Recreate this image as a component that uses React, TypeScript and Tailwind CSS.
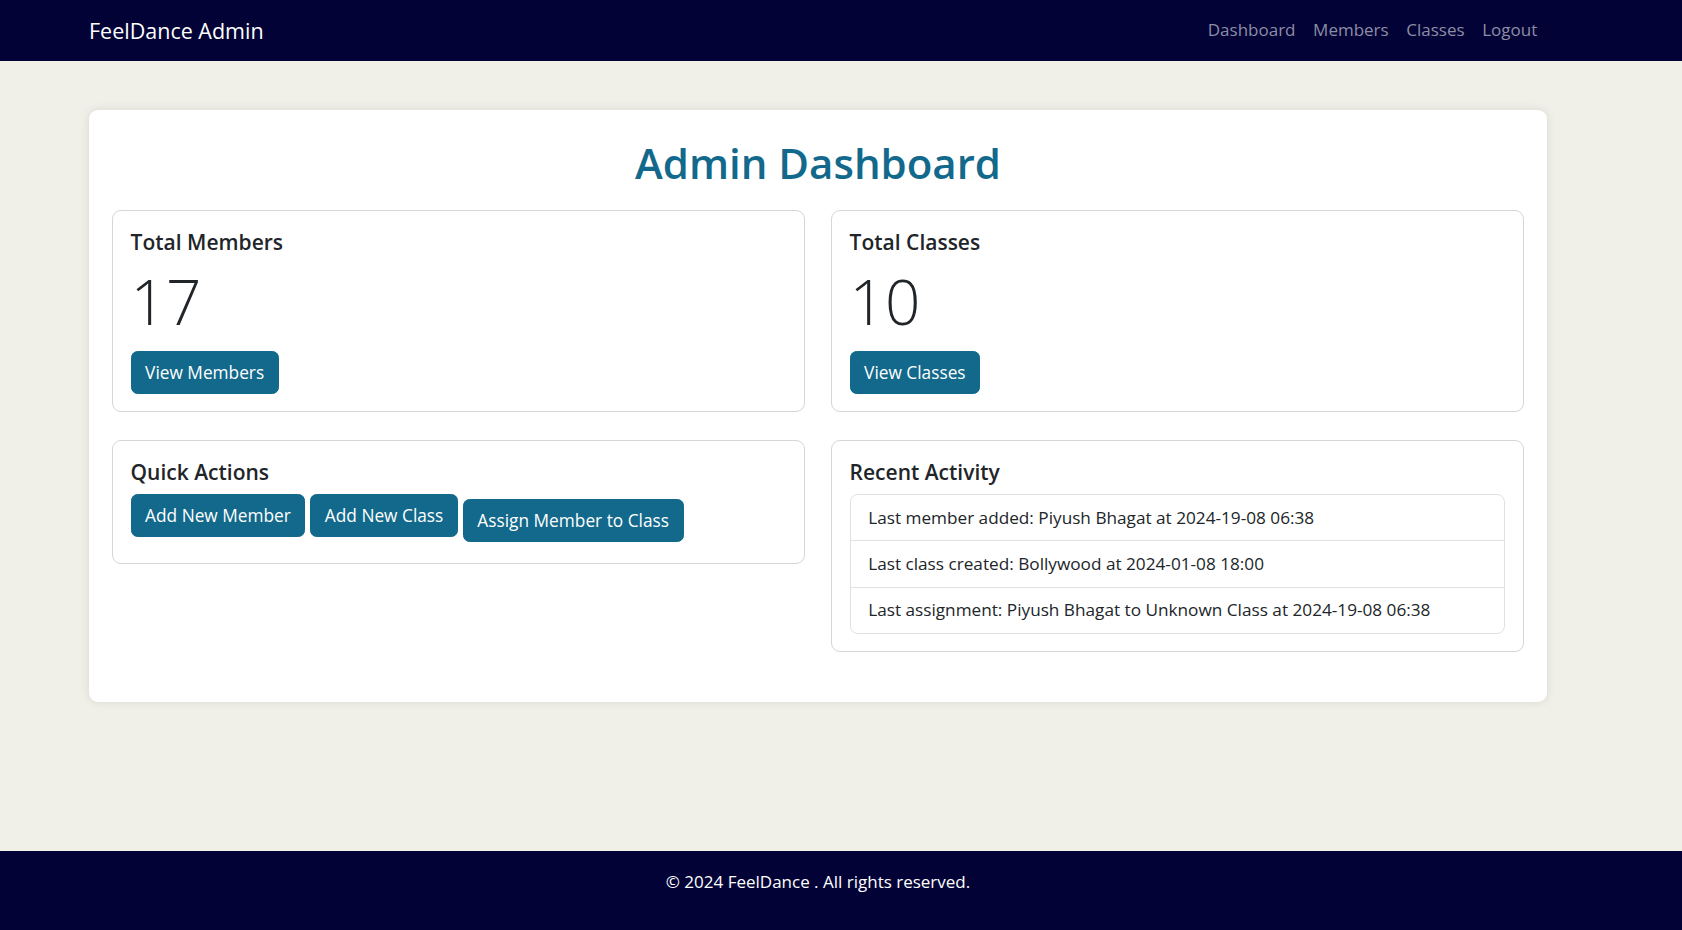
import React from "react";

const links = ["Dashboard", "Members", "Classes", "Logout"];

function Btn({ children, className = "" }: { children: React.ReactNode; className?: string }) {
  return (
    <button
      className={
        "bg-[#12698b] text-white text-[17.3px] leading-[27px] py-[7px] px-[13.5px] border border-[#12698b] rounded-[6.6px] whitespace-nowrap " +
        className
      }
    >
      {children}
    </button>
  );
}

function StatCard({ title, value, action }: { title: string; value: string; action: string }) {
  return (
    <div className="border border-[#d6d6d6] rounded-[9px] bg-white px-[17.6px] pt-[18px] pb-[17px]">
      <h5 className="text-[21px] leading-[27px] font-semibold mb-[8px]">{title}</h5>
      <p className="text-[62px] leading-[74px] font-light mt-[7px] mb-[13px]">{value}</p>
      <Btn>{action}</Btn>
    </div>
  );
}

export default function App() {
  return (
    <div className="min-h-screen flex flex-col bg-[#f0efe8] text-[#212529] font-['Open_Sans','Noto_Sans',sans-serif]">
      <nav className="h-[61px] shrink-0 bg-[#020236] flex items-center justify-between pl-[89px] pr-[136px]">
        <span className="text-white text-[21.5px] leading-[31px]">FeelDance Admin</span>
        <ul className="flex">
          {links.map((l) => (
            <li key={l}>
              <a className="block px-[8.8px] text-[17px] leading-[26.4px] text-[#8d8da5]">{l}</a>
            </li>
          ))}
        </ul>
      </nav>

      <main className="flex-1 pt-[49px]">
        <div className="ml-[89px] w-[1458px] bg-white rounded-[9px] shadow-[0_0_10px_rgba(0,0,0,0.1)] px-[23px] pt-[26px] pb-[50px]">
          <h1 className="text-center text-[42px] leading-[53px] font-semibold text-[#12698b] mb-[21px]">
            Admin Dashboard
          </h1>
          <div className="grid grid-cols-2 gap-x-[26px] gap-y-[28px] items-start">
            <StatCard title="Total Members" value="17" action="View Members" />
            <StatCard title="Total Classes" value="10" action="View Classes" />

            <div className="border border-[#d6d6d6] rounded-[9px] bg-white px-[17.6px] pt-[18px] pb-[17px]">
              <h5 className="text-[21px] leading-[27px] font-semibold mb-[8px]">Quick Actions</h5>
              <div className="flex items-start gap-[5px] mb-[4px]">
                <Btn>Add New Member</Btn>
                <Btn>Add New Class</Btn>
                <Btn className="mt-[5px]">Assign Member to Class</Btn>
              </div>
            </div>

            <div className="border border-[#d6d6d6] rounded-[9px] bg-white px-[17.6px] pt-[18px] pb-[17px]">
              <h5 className="text-[21px] leading-[27px] font-semibold mb-[8px]">Recent Activity</h5>
              <ul className="border border-[#dfe1e4] rounded-[8px] text-[17.2px] leading-[26.4px]">
                <li className="px-[17.6px] py-[9.5px] border-b border-[#dfe1e4]">
                  Last member added: Piyush Bhagat at 2024-19-08 06:38
                </li>
                <li className="px-[17.6px] py-[9.5px] border-b border-[#dfe1e4]">
                  Last class created: Bollywood at 2024-01-08 18:00
                </li>
                <li className="px-[17.6px] py-[9.5px]">
                  Last assignment: Piyush Bhagat to Unknown Class at 2024-19-08 06:38
                </li>
              </ul>
            </div>
          </div>
        </div>
      </main>

      <footer className="shrink-0 bg-[#020236] pt-[18px] pb-[35px]">
        <p className="ml-[89px] w-[1458px] text-center text-white text-[17px] leading-[26px]">
          © 2024 FeelDance . All rights reserved.
        </p>
      </footer>
    </div>
  );
}
